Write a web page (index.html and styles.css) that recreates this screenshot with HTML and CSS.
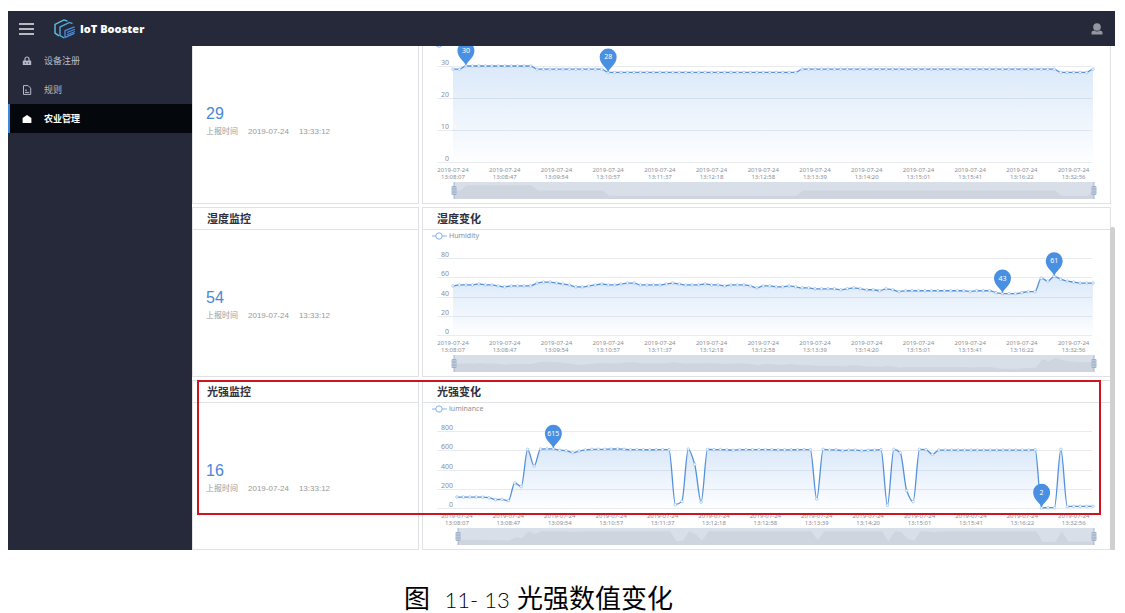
FILE: index.html
```html
<!DOCTYPE html>
<html lang="zh-CN">
<head>
  <meta charset="UTF-8">
  <meta name="viewport" content="width=device-width, initial-scale=1.0">
  <title>IoT Booster</title>
  <link rel="stylesheet" href="styles.css">
</head>
<body>
  <div class="app">
    <header class="topbar">
      <button class="menu-btn" aria-label="菜单">
        <svg width="15" height="12" viewBox="0 0 15 12"><path d="M0 1h15M0 6h15M0 11h15" stroke="#e8e9ec" stroke-width="1.5"/></svg>
      </button>
      <a class="brand" href="#">
        <svg width="22" height="20" viewBox="0 0 22 20" fill="none">
          <path d="M13.5 2.2 10 .9 1 5.5v8.6l4 2.8" stroke="#5fc3e0" stroke-width="1.4"/>
          <path d="M18.5 4.6 15.5 3.4 6 8v8.6l4 2.2" stroke="#4fa9dc" stroke-width="1.4"/>
          <path d="M20.5 7.8 11 11.6v6.8l9.5-4" stroke="#4a90e2" stroke-width="1.3"/>
          <path d="M13 13.4l8-3.2M13 15.8l8-3.4" stroke="#4a90e2" stroke-width="1.1"/>
        </svg>
        <span>IoT Booster</span>
      </a>
      <button class="user-btn" aria-label="用户">
        <svg width="12" height="12" viewBox="0 0 12 12" fill="#9496a1"><circle cx="6" cy="4" r="3.8"/><path d="M.5 11.5V9.8C.5 8.2 2 7.8 3.4 7.6c1.4 1.2 3.8 1.2 5.2 0 1.4.2 2.9.6 2.9 2.2v1.7z"/></svg>
      </button>
    </header>

    <div class="layout">
      <nav class="sidebar">
        <a class="nav-item" href="#">
          <svg width="10" height="10" viewBox="0 0 10 10" fill="none"><path d="M3 5V3a2 2 0 0 1 4 0v2" stroke="#b5bdcc" stroke-width="1.2"/><path d="M.8 4.6h8.4V9H.8z" fill="#b5bdcc"/><path d="M2.8 7h1.4M5.8 7h1.4" stroke="#252939"/></svg>
          设备注册
        </a>
        <a class="nav-item" href="#">
          <svg width="10" height="10" viewBox="0 0 10 10" fill="none" stroke="#b5bdcc"><path d="M1.5.6h4.6l2.6 2.6v6.2H1.5z"/><path d="M3 5.2h2M3 7.4h4.2"/></svg>
          规则
        </a>
        <a class="nav-item active" href="#">
          <svg width="10" height="10" viewBox="0 0 10 10" fill="#fff"><path d="M5 1 9.4 4v5H.6V4z"/></svg>
          农业管理
        </a>
      </nav>

      <main class="content">
        <div class="row">
          <section class="card">
            <div class="reading">
              <strong>29</strong>
              <p><span>上报时间</span><span>2019-07-24</span><span>13:33:12</span></p>
            </div>
          </section>
          <section class="card">
            <div class="chart" data-chart="temperature"></div>
          </section>
        </div>
        <div class="row">
          <section class="card">
            <h2>湿度监控</h2>
            <div class="reading">
              <strong>54</strong>
              <p><span>上报时间</span><span>2019-07-24</span><span>13:33:12</span></p>
            </div>
          </section>
          <section class="card">
            <h2>湿度变化</h2>
            <div class="chart" data-chart="humidity"></div>
          </section>
        </div>
        <div class="row">
          <section class="card">
            <h2>光强监控</h2>
            <div class="reading">
              <strong>16</strong>
              <p><span>上报时间</span><span>2019-07-24</span><span>13:33:12</span></p>
            </div>
          </section>
          <section class="card">
            <h2>光强变化</h2>
            <div class="chart" data-chart="luminance"></div>
          </section>
          <div class="highlight"></div>
        </div>
        <div class="scroll-thumb"></div>
      </main>
    </div>
  </div>
  <p class="caption">图&nbsp; <span>11- 13</span> 光强数值变化</p>
  <script src="charts.js"></script>
</body>
</html>
```
FILE: styles.css
```css
* {
  box-sizing: border-box;
}
body {
  margin: 0;
  height: 100vh;
  padding: 11px 10px 0 8px;
  display: flex;
  flex-direction: column;
  background-color: #fff;
  color: #2c3040;
  font-family: "Liberation Sans", "Noto Sans CJK SC", sans-serif;
  overflow: hidden;
}
h2, p {
  margin: 0;
}
button {
  display: flex;
  padding: 0;
  border: none;
  background: none;
  cursor: pointer;
}
a {
  color: inherit;
  text-decoration: none;
}
.app {
  flex: 1;
  min-height: 0;
  display: flex;
  flex-direction: column;
}
.topbar {
  position: relative;
  flex: none;
  height: 35px;
  padding: 0 12px 0 11px;
  display: flex;
  align-items: center;
  background-color: #252939;
  z-index: 1;
}
.brand {
  display: flex;
  align-items: center;
  gap: 4px;
  margin-left: 20px;
  color: #fff;
  font-family: "Open Sans", "Noto Sans", sans-serif;
  font-size: 11px;
  font-weight: 800;
}
.user-btn {
  margin-left: auto;
}
.layout {
  flex: 1;
  min-height: 0;
  display: flex;
}
.sidebar {
  flex: none;
  width: 184px;
  background-color: #252939;
}
.nav-item {
  display: flex;
  align-items: center;
  gap: 12px;
  height: 29px;
  padding-left: 12px;
  border-left: 2px solid transparent;
  color: #b5bdcc;
  font-size: 9px;
}
.nav-item.active {
  border-left-color: #3f86dd;
  background-color: #04070c;
  color: #fff;
  font-weight: bold;
}
/* scrolled to the end, so rows stack up from the bottom edge */
.content {
  position: relative;
  flex: 1;
  min-width: 0;
  padding-right: 4px;
  display: flex;
  flex-direction: column;
  justify-content: flex-end;
  gap: 3px;
  overflow: hidden;
}
.row {
  position: relative;
  flex: none;
  height: 170px;
  display: grid;
  grid-template-columns: 227px 1fr;
  gap: 3px;
}
.card {
  min-width: 0;
  display: flex;
  flex-direction: column;
  border: 1px solid #dfe1e5;
  background-color: #fff;
}
.card h2 {
  flex: none;
  height: 22px;
  padding-left: 14px;
  border-bottom: 1px solid #dfe1e5;
  font-size: 11px;
  line-height: 23px;
}
.reading {
  flex: 1;
  padding: 5px 0 0 13px;
  display: flex;
  flex-direction: column;
  justify-content: center;
}
.reading strong {
  color: #4a86d8;
  font-size: 16px;
  font-weight: normal;
  line-height: 20px;
}
.reading p {
  display: flex;
  gap: 10px;
  color: #999;
  font-size: 8px;
  line-height: 16px;
}
.chart {
  flex: 1;
  min-height: 0;
}
.chart svg {
  display: block;
}
.chart text {
  fill: #8b8f98;
  font-family: "Noto Sans", "Open Sans", sans-serif;
  font-size: 7px;
}
.chart .tick {
  font-size: 6px;
  text-anchor: middle;
}
.chart .value {
  text-anchor: end;
}
.chart .pin-label {
  fill: #fff;
  text-anchor: middle;
}
.grid-line {
  stroke: #e9ebee;
}
.line {
  fill: none;
  stroke: #5490dc;
  stroke-width: 1.3;
}
.legend-mark {
  fill: #fff;
  stroke: #86b2ea;
}
.dot {
  fill: #fff;
  stroke: #86b2ea;
  stroke-width: 0.6;
}
.pin {
  fill: #4a90e2;
}
.zoom-bg {
  fill: #d9dfe9;
}
.zoom-shadow {
  fill: #ced5df;
}
.zoom-handle {
  fill: #d3dce8;
  stroke: #94a8c4;
  stroke-width: 0.8;
}
.highlight {
  position: absolute;
  top: 0;
  left: 5px;
  right: 10px;
  height: 135px;
  border: 2px solid #cf1420;
}
.scroll-thumb {
  position: absolute;
  top: 181px;
  right: 0;
  bottom: 0;
  width: 5px;
  border-radius: 2px 2px 0 0;
  background-color: #d0d0d0;
}
.caption {
  flex: none;
  margin-top: 36px;
  padding-right: 46px;
  color: #000;
  font-size: 26px;
  line-height: 26px;
  text-align: center;
}
.caption span {
  font-family: Lato, sans-serif;
  font-size: 22px;
  font-weight: 300;
}
```
FILE: charts.js
```javascript
const times = ['13:08:07', '13:08:47', '13:09:54', '13:10:57', '13:11:37', '13:12:18', '13:12:58',
  '13:13:39', '13:14:20', '13:15:01', '13:15:41', '13:16:22', '13:32:56'];

const rep = (value, count) => Array(count).fill(value);

const charts = {
  temperature: {
    name: 'Temperature', left: 30, max: 30, step: 10, pins: [2, 24],
    data: [29, 29, ...rep(30, 11), ...rep(29, 11), ...rep(28, 30), ...rep(29, 40), ...rep(28, 5), 29]
  },
  humidity: {
    name: 'Humidity', left: 30, max: 80, step: 20, pins: [85, 93],
    data: [51, 52, 52, 52, 53, 52, 52, 51, 50, 51, 51, 51, 51, 54, 55, 55, 54, 53, 52, 50,
      50, 51, 52, 53, 52, 52, 53, 54, 54, 52, 52, 52, 52, 53, 54, 53, 52, 52, 52, 53,
      52, 52, 51, 52, 52, 52, 51, 49, 51, 51, 50, 50, 51, 50, 49, 49, 48, 48, 48, 48,
      47, 48, 49, 48, 47, 47, 46, 48, 47, 45, ...rep(46, 10),
      45, 46, 46, 46, 44, 43, 43, 43, 44, 45, 45, 59, 56, 61, 58, 56, 55, 54, 54, 54]
  },
  luminance: {
    name: 'luminance', left: 34, max: 800, step: 200, pins: [15, 91],
    data: [114, 114, 114, 114, 113, 107, 87, 90, 76, 260, 222, 609, 436, 612, 614, 615, 600, 596, 575, 592,
      603, 610, 610, 610, 613, 613, 610, 605, 607, 605, 605, 605, 606, 606, 35, 69, 612, 453, 62, 609,
      607, 607, 605, 600, 606, ...rep(606, 5), 605, 604, 605, 605, 606, 606, 93, 609, 603, 604,
      596, 602, 602, 596, 599, 602, 606, 28, 609, 575, 180, 66, 609, 606, 558, ...rep(602, 15),
      606, 2, 3, 4, 609, 15, 17, 17, 17, 17]
  }
};

// cubic path with flat tangents at peaks and valleys
function smoothPath(points) {
  const slope = (i) => {
    if (i === 0 || i === points.length - 1) return 0;
    const a = (points[i][1] - points[i - 1][1]) / (points[i][0] - points[i - 1][0]);
    const b = (points[i + 1][1] - points[i][1]) / (points[i + 1][0] - points[i][0]);
    return a * b <= 0 ? 0 : 2 * a * b / (a + b);
  };
  let d = `M${points[0]}`;
  for (let i = 1; i < points.length; i++) {
    const [x0, y0] = points[i - 1];
    const [x1, y1] = points[i];
    const t = (x1 - x0) / 3;
    d += `C${x0 + t} ${y0 + slope(i - 1) * t} ${x1 - t} ${y1 - slope(i) * t} ${x1} ${y1}`;
  }
  return d;
}

function draw(el) {
  const id = el.dataset.chart;
  const { name, left, max, step, pins, data } = charts[id];
  el.innerHTML = '';
  const w = el.clientWidth;
  const h = el.clientHeight;
  const right = w - 17;
  const top = h - 118;
  const bottom = h - 41;
  // the first chart has 32px between its grid lines, the others 19px
  const plotTop = id === 'temperature' ? bottom - 96 : top;
  const x = (i) => left + (right - left) * i / (data.length - 1);
  const y = (v) => bottom - (bottom - plotTop) * v / max;
  const points = data.map((v, i) => [x(i), y(v)]);
  const path = smoothPath(points);
  const legendY = plotTop - 22;

  let svg = `<svg width="${w}" height="${h}">
    <defs><linearGradient id="fill-${id}" x1="0" y1="0" x2="0" y2="1">
      <stop offset="0" stop-color="#4a90e2" stop-opacity="0.2"/>
      <stop offset="1" stop-color="#4a90e2" stop-opacity="0.01"/>
    </linearGradient></defs>
    <path class="legend-mark" d="M9 ${legendY}h15"/><circle class="legend-mark" cx="16" cy="${legendY}" r="3.2"/>
    <text x="26" y="${legendY + 2}">${name}</text>`;

  for (let v = 0; v <= max; v += step) {
    const gy = Math.round(y(v)) + 0.5;
    svg += `<path class="grid-line" d="M14 ${gy}H${right - 1}"/>
      <text class="value" x="${left - 4}" y="${gy - 2}">${v}</text>`;
  }
  times.forEach((time, i) => {
    svg += `<text class="tick" x="${x(i * 8)}" y="${h - 31}">2019-07-24</text>
      <text class="tick" x="${x(i * 8)}" y="${h - 24}">${time}</text>`;
  });

  svg += `<path d="${path}V${bottom}H${left}Z" fill="url(#fill-${id})"/><path class="line" d="${path}"/>`;
  points.forEach(([px, py]) => {
    svg += `<circle class="dot" cx="${px}" cy="${py}" r="1.3"/>`;
  });
  pins.forEach((i) => {
    svg += `<g transform="translate(${points[i]})">
      <path class="pin" d="M0 0C-1-5-8.5-8-8.5-15.5a8.5 8.5 0 0 1 17 0C8.5-8 1-5 0 0z"/>
      <text class="pin-label" y="-13">${data[i]}</text></g>`;
  });

  // zoom slider
  const low = Math.min(...data);
  const high = Math.max(...data);
  const pad = (high - low) * 0.3;
  const zy = (v) => h - 4 - 17 * (v - low + pad) / (high - low + pad * 2);
  const shadow = data.map((v, i) => `${x(i) + 1} ${zy(v)}`).join('L');
  svg += `<rect class="zoom-bg" x="${left + 1}" y="${h - 21}" width="${right - left}" height="17"/>
    <path class="zoom-shadow" d="M${shadow}V${h - 4}H${left + 1}Z"/>`;
  [left + 1, right + 1].forEach((hx) => {
    svg += `<path class="zoom-handle" d="M${hx} ${h - 21}v17M${hx - 2} ${h - 16.5}h4v8h-4zM${hx - 2} ${h - 14}h4M${hx - 2} ${h - 11}h4"/>`;
  });
  el.innerHTML = svg + '</svg>';
}

function drawAll() {
  document.querySelectorAll('.chart').forEach(draw);
}

window.addEventListener('resize', drawAll);
drawAll();
```
